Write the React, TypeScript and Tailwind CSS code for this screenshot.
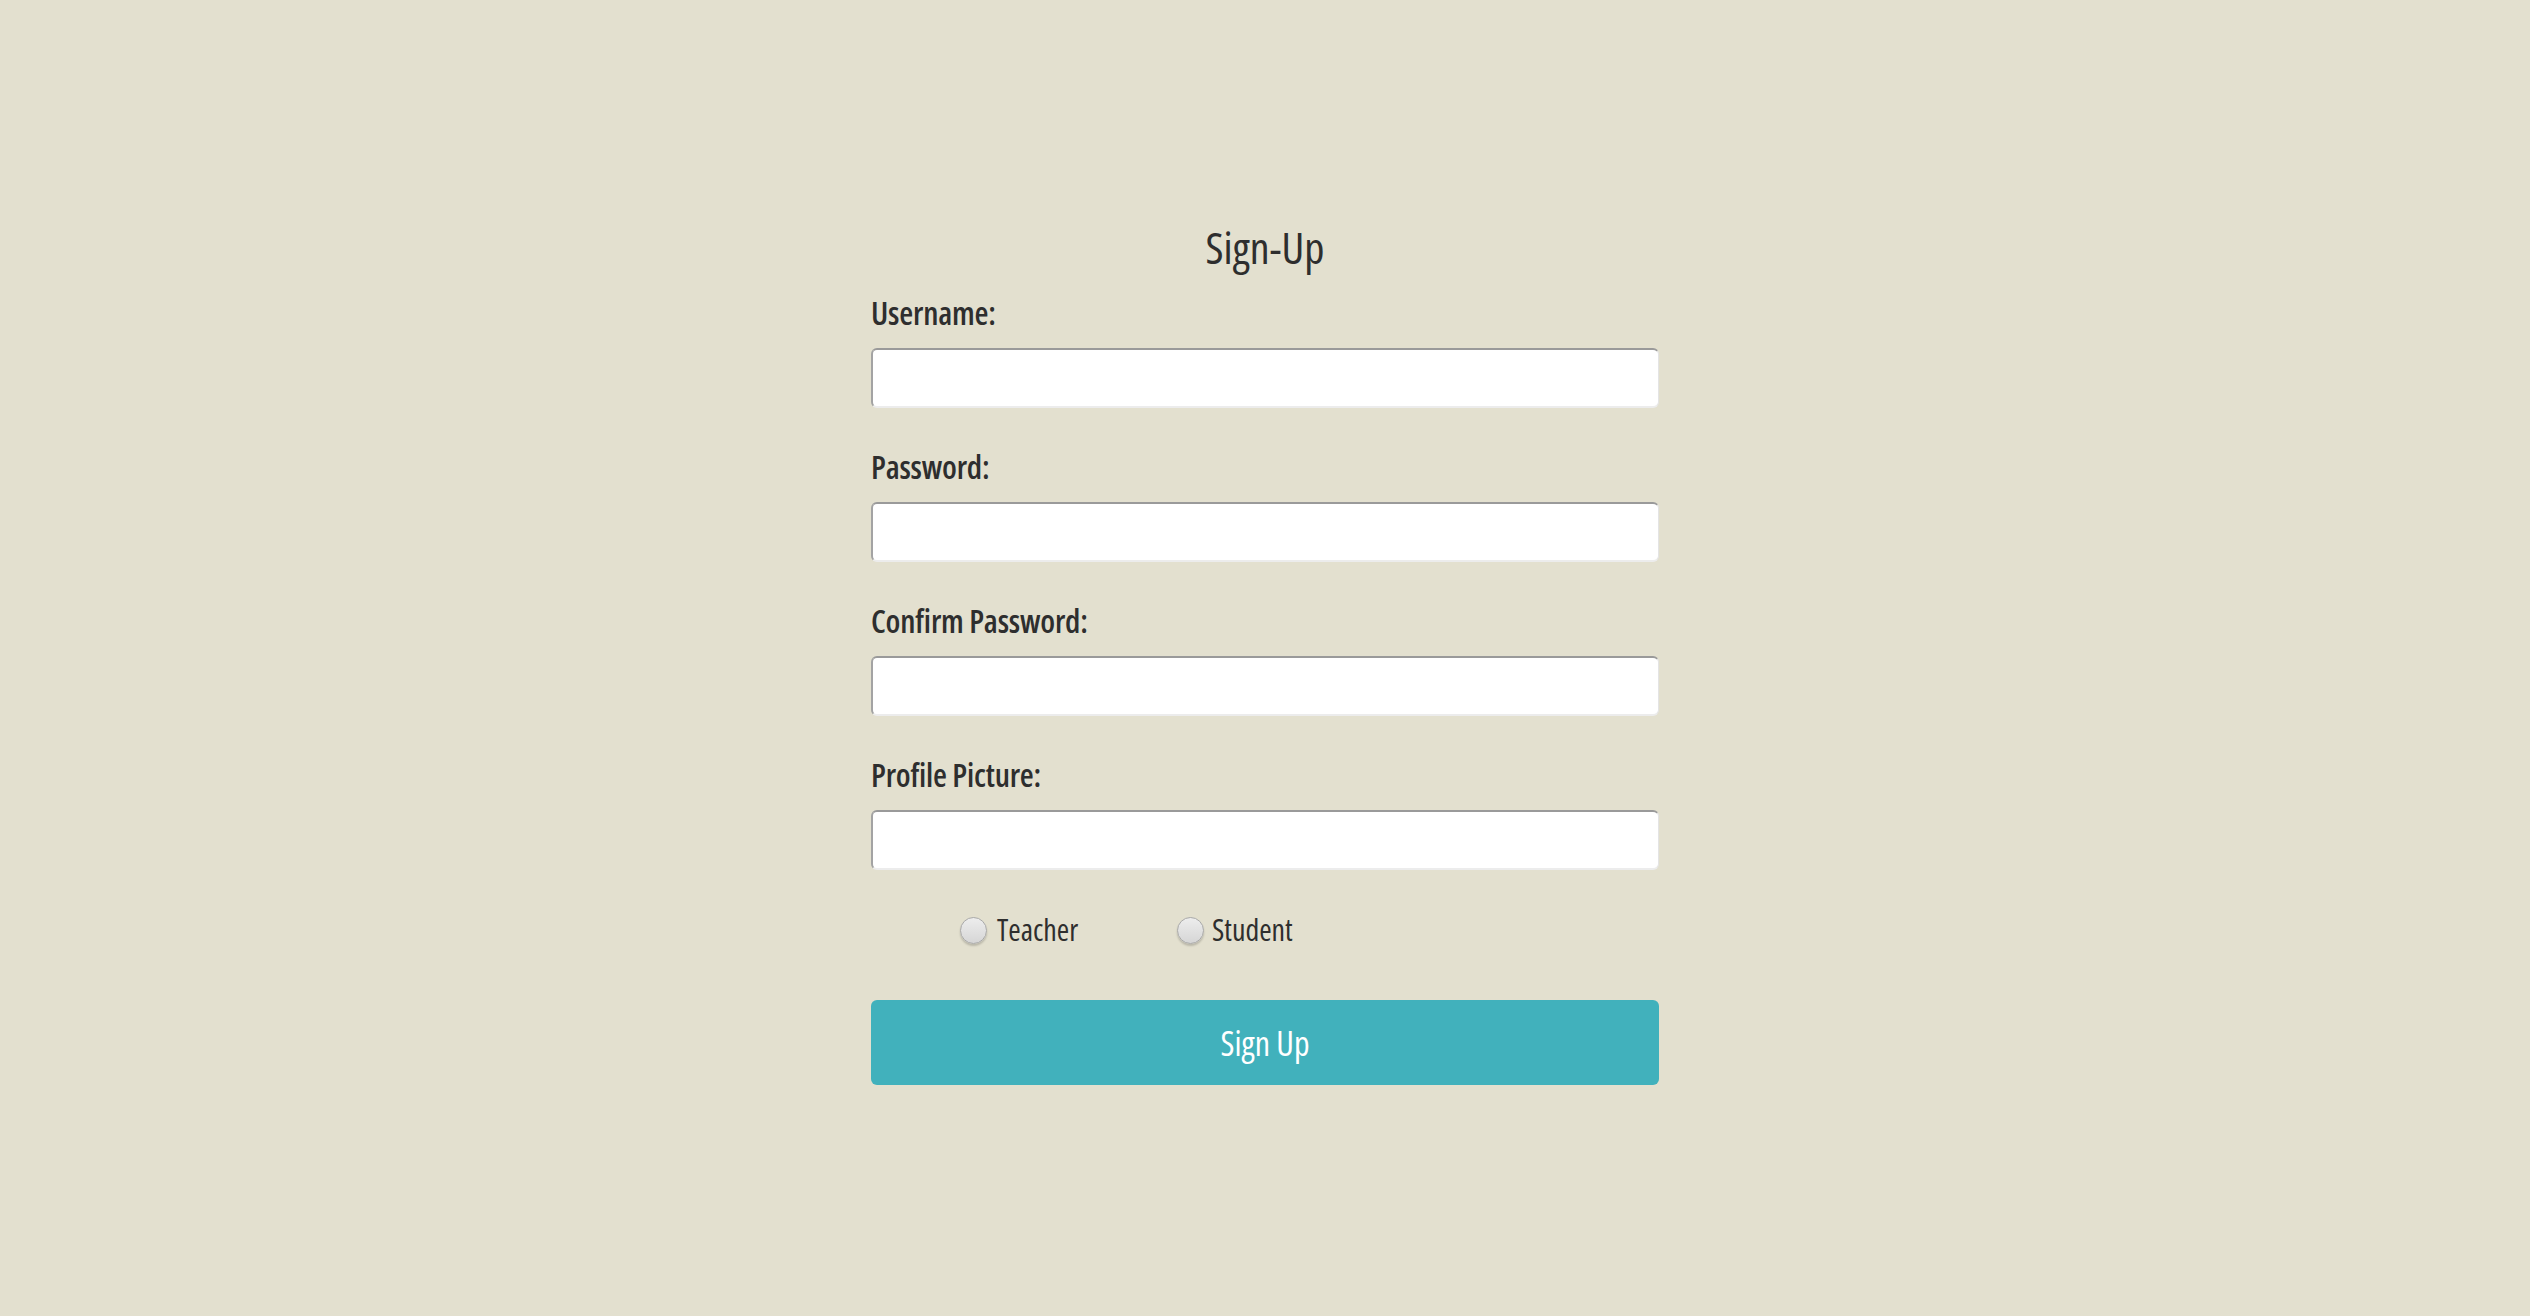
import { useState } from 'react';

type Role = 'teacher' | 'student';

const fields = ['Username:', 'Password:', 'Confirm Password:', 'Profile Picture:'];

function Radio({ checked }: { checked: boolean }) {
  return (
    <span className="flex h-[27px] w-[27px] shrink-0 items-center justify-center rounded-full border border-[#a9a9a9] bg-[linear-gradient(#ededed,#d6d6d6)] shadow-[0_2px_2px_rgba(0,0,0,0.18)]">
      {checked && <span className="h-[10px] w-[10px] rounded-full bg-[#333]" />}
    </span>
  );
}

export default function App() {
  const [role, setRole] = useState<Role | null>(null);

  return (
    <div className="min-h-[1316px] w-full bg-[#e3e0cf] font-['Open_Sans',sans-serif] [font-stretch:75%] text-[#2e2e2e]">
      <div className="mx-auto flex w-[788px] flex-col pt-[225px]">
        <h1 className="text-center text-[44px] leading-[44px] font-normal">Sign-Up</h1>

        <div className="mt-[28px] flex flex-col gap-[43px]">
          {fields.map((label) => (
            <div key={label} className="flex flex-col gap-[19px]">
              <label className="text-[32px] leading-[32px] font-semibold tracking-[-0.2px]">{label}</label>
              <input
                type="text"
                className="h-[60px] w-full rounded-[6px] border-t-2 border-l-2 border-r border-b-2 border-t-[#9a9a9a] border-l-[#a3a3a3] border-r-[#e4e4e4] border-b-[#ececec] bg-white px-3 text-[28px] outline-none"
              />
            </div>
          ))}
        </div>

        <div className="mt-[45px] flex h-[30px] items-center pl-[89px] text-[30px] leading-[30px] font-medium">
          <button type="button" onClick={() => setRole('teacher')} className="flex w-[217px] items-center gap-[10px]">
            <Radio checked={role === 'teacher'} />
            <span>Teacher</span>
          </button>
          <button type="button" onClick={() => setRole('student')} className="flex items-center gap-[8px]">
            <Radio checked={role === 'student'} />
            <span>Student</span>
          </button>
        </div>

        <button
          type="button"
          className="mt-[55px] h-[85px] w-full rounded-[6px] bg-[#41b1bc] text-[34px] leading-[34px] font-normal text-white"
        >
          Sign Up
        </button>
      </div>
    </div>
  );
}
